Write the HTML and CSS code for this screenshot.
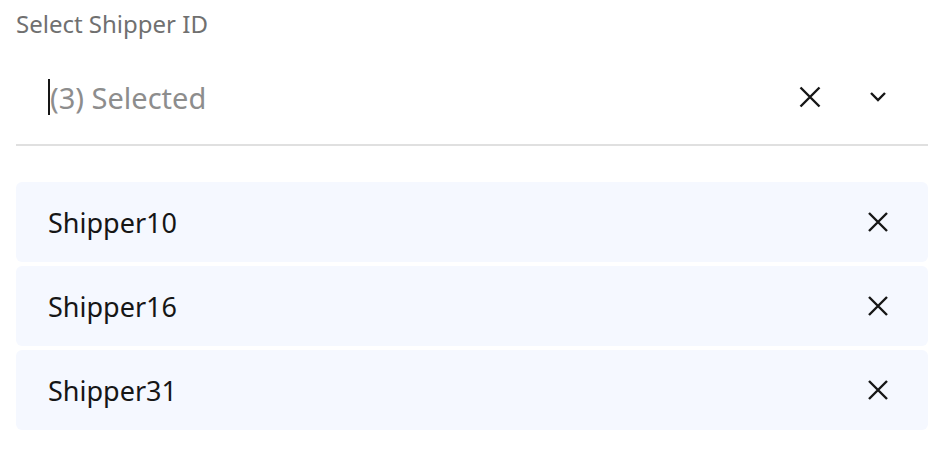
FILE: index.html
```html
<!DOCTYPE html>
<html>
<head>
  <link rel="stylesheet" href="styles.css">
</head>
<body>
  <!-- Shipper multi-select -->
  <div class="field">
    <label class="field-label" for="shipper">Select Shipper ID</label>

    <div class="control">
      <span class="caret"></span>
      <input class="control-input" id="shipper" type="text" placeholder="(3) Selected">
      <button class="icon-btn clear" type="button" aria-label="Clear">
        <svg width="28" height="28" viewBox="0 0 28 28"><path d="M4.5 4.5L23.5 23.5M23.5 4.5L4.5 23.5" /></svg>
      </button>
      <button class="icon-btn toggle" type="button" aria-label="Open">
        <svg width="28" height="28" viewBox="0 0 28 28"><path d="M7 10L14 17L21 10" /></svg>
      </button>
    </div>

    <ul class="chips">
      <li class="chip">
        <span class="chip-text">Shipper10</span>
        <button class="icon-btn remove" type="button" aria-label="Remove">
          <svg width="24" height="24" viewBox="0 0 24 24"><path d="M3 3L21 21M21 3L3 21" /></svg>
        </button>
      </li>
      <li class="chip">
        <span class="chip-text">Shipper16</span>
        <button class="icon-btn remove" type="button" aria-label="Remove">
          <svg width="24" height="24" viewBox="0 0 24 24"><path d="M3 3L21 21M21 3L3 21" /></svg>
        </button>
      </li>
      <li class="chip">
        <span class="chip-text">Shipper31</span>
        <button class="icon-btn remove" type="button" aria-label="Remove">
          <svg width="24" height="24" viewBox="0 0 24 24"><path d="M3 3L21 21M21 3L3 21" /></svg>
        </button>
      </li>
    </ul>
  </div>
</body>
</html>
```

FILE: styles.css
```css
/* page */
body {
  margin: 0;
  background: #fff;
  font-family: 'Noto Sans', 'Roboto', sans-serif;
  color: #161616;
}

.field {
  padding: 8px 16px 0;
}

/* label */
.field-label {
  display: block;
  font-size: 24px;
  line-height: 32px;
  color: #707070;
}

/* input row */
.control {
  display: flex;
  align-items: center;
  height: 94px;
  padding: 10px 36px 0 32px;
  border-bottom: 2px solid #e0e0e0;
}

.caret {
  width: 2px;
  height: 36px;
  background: #161616;
}

.control-input {
  flex: 1;
  border: 0;
  outline: none;
  background: transparent;
  padding: 0;
  font-family: inherit;
  font-size: 29px;
  color: #161616;
}

.control-input::placeholder {
  color: #8d8d8d;
}

.icon-btn {
  display: flex;
  align-items: center;
  justify-content: center;
  border: 0;
  background: none;
  padding: 0;
  cursor: pointer;
}

.icon-btn path {
  fill: none;
  stroke: #161616;
  stroke-width: 2.4;
}

.clear {
  width: 28px;
  height: 28px;
}

.toggle {
  width: 28px;
  height: 28px;
  margin-left: 40px;
}

/* selected items */
.chips {
  list-style: none;
  margin: 36px 0 0;
  padding: 0;
  display: flex;
  flex-direction: column;
  gap: 4px;
}

.chip {
  display: flex;
  align-items: center;
  justify-content: space-between;
  height: 80px;
  padding: 0 38px 0 32px;
  background: #f5f8ff;
  border-radius: 6px;
}

.chip-text {
  font-size: 27px;
}

.remove {
  width: 24px;
  height: 24px;
}
```
